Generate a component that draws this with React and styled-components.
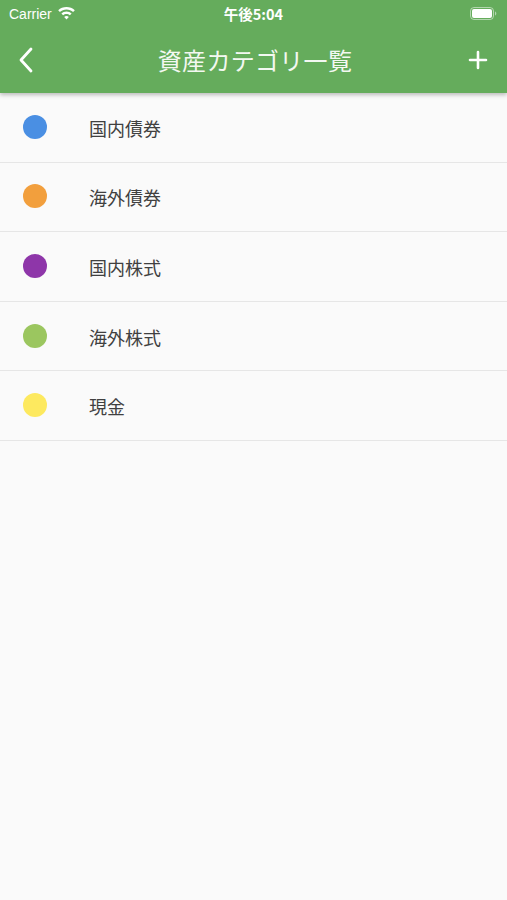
import React from "react";
import styled, { createGlobalStyle } from "styled-components";

const GlobalStyle = createGlobalStyle`
  html, body {
    margin: 0;
    padding: 0;
    background: #fafafa;
  }
  body {
    font-family: "Noto Sans CJK JP", "Noto Sans", "Liberation Sans", sans-serif;
  }
`;

const Screen = styled.div`
  width: 507px;
  height: 900px;
  background: #fafafa;
  overflow: hidden;
`;

const Header = styled.header`
  background: #65ac5c;
  color: #fff;
  box-shadow: 0 2px 4px rgba(0, 0, 0, 0.25);
  position: relative;
  z-index: 1;
`;

const StatusBar = styled.div`
  height: 27px;
  display: grid;
  grid-template-columns: 1fr auto 1fr;
  align-items: center;
  padding: 0 9px;
  font-size: 14px;
`;

const Carrier = styled.div`
  display: flex;
  align-items: center;
  gap: 6px;
  font-family: "Liberation Sans", sans-serif;
`;

const Clock = styled.div`
  font-weight: 700;
  font-size: 14.5px;
`;

const Battery = styled.div`
  justify-self: end;
  display: flex;
  align-items: center;
  margin-right: 1px;
`;

const Toolbar = styled.div`
  height: 66px;
  display: flex;
  align-items: center;
  justify-content: space-between;
  padding: 0 16px 0 13px;
`;

const Title = styled.h1`
  margin: 0;
  font-size: 24px;
  font-weight: 400;
  letter-spacing: 0.3px;
  color: #f3f8f1;
  transform: translate(3px, -1px);
`;

const IconButton = styled.button`
  width: 26px;
  height: 30px;
  padding: 0;
  border: 0;
  background: none;
  color: #fff;
  display: flex;
  align-items: center;
  justify-content: center;
`;

const List = styled.ul`
  list-style: none;
  margin: 0;
  padding: 0;
`;

const Row = styled.li`
  box-sizing: border-box;
  height: 69.6px;
  display: flex;
  align-items: center;
  padding-left: 23px;
  border-bottom: 1px solid #e6e6e6;
`;

const Dot = styled.span`
  width: 24px;
  height: 24px;
  border-radius: 50%;
  background: ${({ $color }) => $color};
  flex-shrink: 0;
  margin-top: -1px;
`;

const Label = styled.span`
  margin-left: 42px;
  font-size: 18px;
  color: #404040;
  margin-top: 1px;
`;

const categories = [
  { name: "国内債券", color: "#4a8fe3" },
  { name: "海外債券", color: "#f29f3d" },
  { name: "国内株式", color: "#8e36a9" },
  { name: "海外株式", color: "#9bc65f" },
  { name: "現金", color: "#fde95f" },
];

const Wifi = () => (
  <svg width="17" height="13" viewBox="0 0 17 13" fill="#fff">
    <path d="M8.5 0C5.3 0 2.4 1.2 0.2 3.2l1.7 1.8C3.6 3.4 5.9 2.5 8.5 2.5s4.9 0.9 6.6 2.5l1.7-1.8C14.6 1.2 11.7 0 8.5 0z" />
    <path d="M8.5 4.5c-2 0-3.8 0.8-5.1 2l1.7 1.8c0.9-0.8 2.1-1.3 3.4-1.3s2.5 0.5 3.4 1.3l1.7-1.8c-1.3-1.2-3.1-2-5.1-2z" />
    <path d="M8.5 9c-0.9 0-1.7 0.3-2.3 0.9L8.5 12.5l2.3-2.6C10.2 9.3 9.4 9 8.5 9z" />
  </svg>
);

const BatteryIcon = () => (
  <svg width="27" height="13" viewBox="0 0 27 13">
    <rect x="0.5" y="0.5" width="23" height="12" rx="3.5" fill="none" stroke="rgba(255,255,255,0.5)" />
    <rect x="2" y="2" width="20" height="9" rx="2" fill="#fff" />
    <path d="M25 4.5v4c0.8-0.3 1.3-1.1 1.3-2s-0.5-1.7-1.3-2z" fill="rgba(255,255,255,0.5)" />
  </svg>
);

const BackIcon = () => (
  <svg width="16" height="26" viewBox="0 0 16 26" fill="none" stroke="#fff" strokeWidth="2.8" strokeLinecap="round" strokeLinejoin="round">
    <path d="M13 2L3 13l10 11" />
  </svg>
);

const PlusIcon = () => (
  <svg width="20" height="20" viewBox="0 0 20 20" fill="none" stroke="#fff" strokeWidth="2.6" strokeLinecap="round">
    <path d="M10 2v16M2 10h16" />
  </svg>
);

export default function App() {
  return (
    <Screen>
      <GlobalStyle />
      <Header>
        <StatusBar>
          <Carrier>
            Carrier
            <Wifi />
          </Carrier>
          <Clock>午後5:04</Clock>
          <Battery>
            <BatteryIcon />
          </Battery>
        </StatusBar>
        <Toolbar>
          <IconButton aria-label="戻る">
            <BackIcon />
          </IconButton>
          <Title>資産カテゴリ一覧</Title>
          <IconButton aria-label="追加">
            <PlusIcon />
          </IconButton>
        </Toolbar>
      </Header>
      <List>
        {categories.map((c) => (
          <Row key={c.name}>
            <Dot $color={c.color} />
            <Label>{c.name}</Label>
          </Row>
        ))}
      </List>
    </Screen>
  );
}
